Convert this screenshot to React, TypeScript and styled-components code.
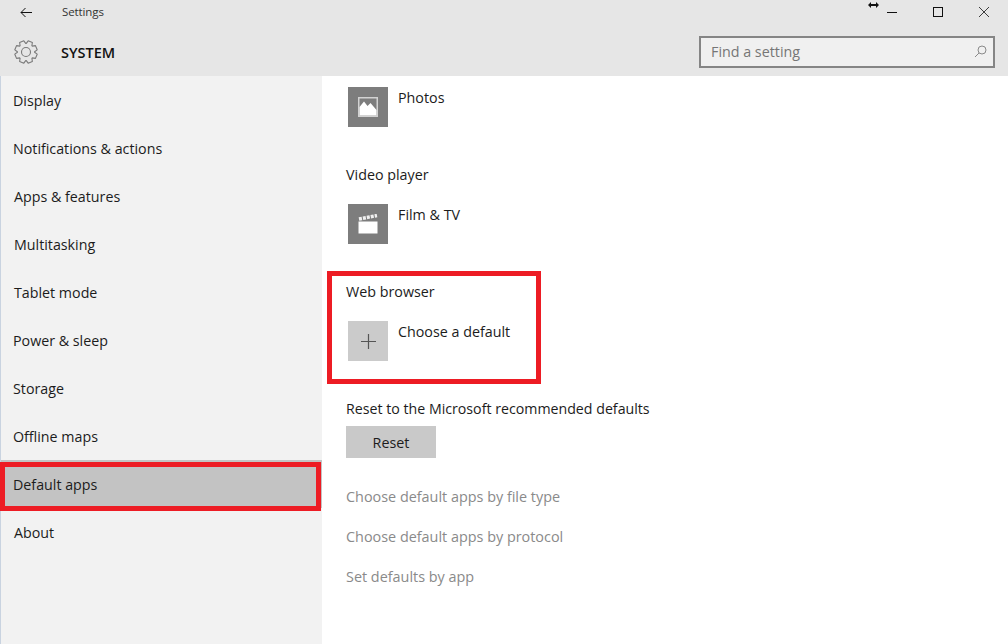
import React from "react";
import styled, { createGlobalStyle } from "styled-components";

const Global = createGlobalStyle`
  html, body { margin: 0; padding: 0; background: #fff; }
  body { font-family: "Open Sans", "Noto Sans", "Liberation Sans", sans-serif; color: #1a1a1a; }
`;

const Page = styled.div`
  width: 1008px; height: 644px; display: flex; flex-direction: column; overflow: hidden;
`;
const Header = styled.header`
  height: 76px; background: #e6e6e6; display: flex; flex-direction: column; flex: none;
`;
const TitleBar = styled.div`
  height: 24px; display: flex; align-items: center; padding: 0 1px 0 20px;
`;
const BackButton = styled.span`
  display: flex; width: 12px; margin-right: 30px;
`;
const WindowTitle = styled.span`
  font-size: 11.5px; letter-spacing: -0.1px; color: #333;
  position: relative; top: -1px;
`;
const WindowControls = styled.div`
  margin-left: auto; display: flex; align-items: center; position: relative;
`;
const Resize = styled.span`
  position: absolute; left: -1px; top: 2px; display: flex;
`;
const WinBtn = styled.span`
  width: 46px; height: 24px; display: flex; align-items: center; justify-content: center;
`;
const HeaderRow = styled.div`
  flex: 1; display: flex; align-items: center; padding: 4px 13px 0 14px;
`;
const GearWrap = styled.span`
  display: flex; width: 24px; margin-right: 23px;
`;
const Heading = styled.h1`
  margin: 0; font-size: 14.5px; font-weight: 600; color: #111;
`;
const Search = styled.div`
  margin-left: auto; width: 296px; height: 32px; box-sizing: border-box; border: 2px solid #858585; background: #f0f0f0;
  display: flex; align-items: center; justify-content: space-between; padding: 0 6px 2px 10px; font-size: 14.3px; color: #767676;
`;
const Body = styled.div`
  flex: 1; display: flex;
`;
const Side = styled.nav`
  width: 322px; flex: none; background: #f2f2f2; border-left: 1px solid #c9d3e0; box-sizing: border-box;
`;
const NavItem = styled.div<{ $active?: boolean; $shift?: number }>`
  height: 48px; display: flex; align-items: center; box-sizing: border-box; position: relative;
  padding-left: ${(p) => 12 + (p.$shift ?? 0)}px; font-size: 14.25px; color: #1c1c1c;
  background: ${(p) => (p.$active ? "#c3c3c3" : "transparent")};
  ${(p) => p.$active && `
    &::after {
      content: ""; position: absolute; left: -1px; right: 1px; top: 2px; height: 49px;
      box-sizing: border-box; border: 5px solid #ed1c24;
    }
  `}
`;
const Main = styled.main`
  flex: 1; padding: 11px 0 0 24px; display: flex; flex-direction: column; font-size: 14.3px; color: #1c1c1c;
`;
const AppRow = styled.div`
  display: flex; gap: 10px; margin-left: 2px; height: 40px;
`;
const Tile = styled.span<{ $light?: boolean }>`
  width: 40px; height: 40px; flex: none; display: flex; align-items: center; justify-content: center;
  background: ${(p) => (p.$light ? "#cbcbcb" : "#7d7d7d")};
`;
const AppName = styled.span`
  line-height: 22px;
`;
const Label = styled.div`
  line-height: 20px;
`;
const VideoLabel = styled(Label)`
  margin: 38px 0 19px;
`;
const Callout = styled.section`
  width: 214px; height: 113px; box-sizing: border-box; border: 5px solid #ed1c24; margin: 27px 0 0 -19px;
  padding: 6px 0 0 14px; display: flex; flex-direction: column; gap: 19px;
`;
const ResetLabel = styled(Label)`
  margin-top: 15px; font-size: 14.2px;
`;
const ResetButton = styled.button`
  width: 90px; height: 32px; margin-top: 7px; border: 0; padding: 0; background: #c9c9c9; color: #1c1c1c;
  font: inherit; font-size: 14.3px;
`;
const LinkList = styled.div`
  margin-top: 29px; display: flex; flex-direction: column; gap: 20px; font-size: 14.4px;
`;
const DimLink = styled.span`
  line-height: 20px; color: #8a8a8a;
`;

const nav: [string, number][] = [
  ["Display", 0], ["Notifications & actions", 0], ["Apps & features", 1], ["Multitasking", 1],
  ["Tablet mode", 1], ["Power & sleep", 0], ["Storage", 0], ["Offline maps", 0], ["Default apps", 0], ["About", 1],
];

const gearPath = (() => {
  const pt = (r: number, a: number) =>
    `${(12 + r * Math.cos(a)).toFixed(2)} ${(12 + r * Math.sin(a)).toFixed(2)}`;
  const step = Math.PI / 4;
  let d = "";
  for (let i = 0; i < 8; i++) {
    const c = i * step + Math.PI / 8;
    d += `${i === 0 ? "M" : "L"}${pt(8.6, c - 0.36)}L${pt(11.4, c - 0.2)}L${pt(11.4, c + 0.2)}L${pt(8.6, c + 0.36)}`;
  }
  return d + "Z";
})();

const Gear = () => (
  <svg width="24" height="24" viewBox="0 0 24 24" fill="none" stroke="#7a7a7a" strokeWidth="1.1" strokeLinejoin="round">
    <path d={gearPath} />
    <circle cx="12" cy="12" r="4.500" />
  </svg>
);

export default function App() {
  return (
    <Page>
      <Global />
      <Header>
        <TitleBar>
          <BackButton>
            <svg width="12" height="11" viewBox="0 0 12 11" fill="none" stroke="#111" strokeWidth="1">
              <path d="M12 5.500H1M5.500 1 1 5.500 5.500 10" />
            </svg>
          </BackButton>
          <WindowTitle>Settings</WindowTitle>
          <WindowControls>
            <Resize>
              <svg width="11" height="6" viewBox="0 0 11 6" fill="#111">
                <path d="M0 3 3 0v2h5V0l3 3-3 3V4H3v2z" />
              </svg>
            </Resize>
            <WinBtn>
              <svg width="10" height="10" viewBox="0 0 10 10"><path d="M0 5.500h10" stroke="#111" /></svg>
            </WinBtn>
            <WinBtn>
              <svg width="10" height="10" viewBox="0 0 10 10" fill="none"><rect x=".5" y=".5" width="9" height="9" stroke="#111" /></svg>
            </WinBtn>
            <WinBtn>
              <svg width="10" height="10" viewBox="0 0 10 10" fill="none"><path d="M0 0l10 10M10 0 0 10" stroke="#111" strokeWidth=".8" /></svg>
            </WinBtn>
          </WindowControls>
        </TitleBar>
        <HeaderRow>
          <GearWrap><Gear /></GearWrap>
          <Heading>SYSTEM</Heading>
          <Search>
            Find a setting
            <svg width="13" height="13" viewBox="0 0 13 13" fill="none" stroke="#8a8a8a">
              <circle cx="8" cy="5" r="4" />
              <path d="M5 8l-4 4" />
            </svg>
          </Search>
        </HeaderRow>
      </Header>
      <Body>
        <Side>
          {nav.map(([t, s]) => (
            <NavItem key={t} $shift={s} $active={t === "Default apps"}>{t}</NavItem>
          ))}
        </Side>
        <Main>
          <AppRow>
            <Tile>
              <svg width="20" height="20" viewBox="0 0 20 20">
                <rect x=".75" y=".75" width="18.500" height="18.500" fill="none" stroke="#d2d2d2" strokeWidth="1.500" />
                <path d="M1.500 18.500V10L6 4.500 9.500 9l3-3 6 7v5.500z" fill="#fff" />
              </svg>
            </Tile>
            <AppName>Photos</AppName>
          </AppRow>
          <VideoLabel>Video player</VideoLabel>
          <AppRow>
            <Tile>
              <svg width="20" height="20" viewBox="0 0 20 20" fill="#fff">
                <rect x="0.500" y="7.500" width="19" height="12" />
                <path d="M1 5 19 1.500" stroke="#f0f0f0" strokeWidth="3.500" strokeDasharray="3 1" fill="none" />
              </svg>
            </Tile>
            <AppName>Film &amp; TV</AppName>
          </AppRow>
          <Callout>
            <Label>Web browser</Label>
            <AppRow>
              <Tile $light>
                <svg width="15" height="15" viewBox="0 0 15 15"><path d="M7.500 0v15M0 7.500h15" stroke="#555" strokeWidth="1.200" /></svg>
              </Tile>
              <AppName>Choose a default</AppName>
            </AppRow>
          </Callout>
          <ResetLabel>Reset to the Microsoft recommended defaults</ResetLabel>
          <ResetButton>Reset</ResetButton>
          <LinkList>
            <DimLink>Choose default apps by file type</DimLink>
            <DimLink>Choose default apps by protocol</DimLink>
            <DimLink>Set defaults by app</DimLink>
          </LinkList>
        </Main>
      </Body>
    </Page>
  );
}
